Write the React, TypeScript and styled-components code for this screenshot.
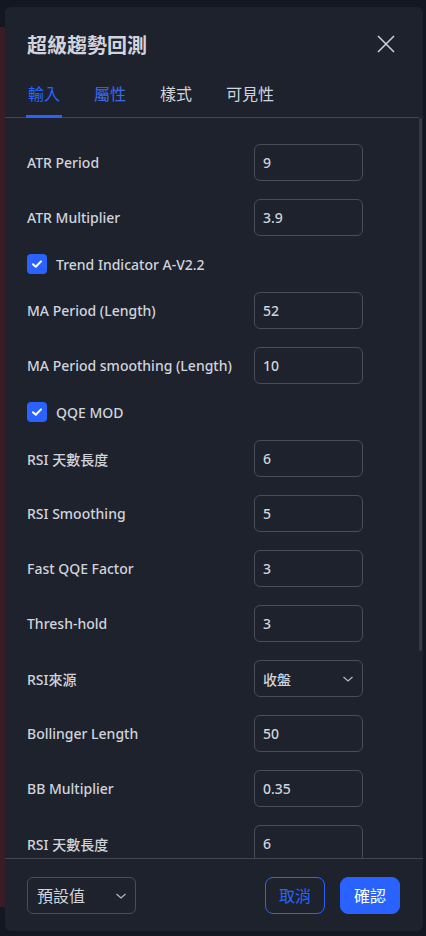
import React from "react";
import styled, { createGlobalStyle } from "styled-components";

type Field =
    | { kind: "input"; label: string; value: string }
    | { kind: "check"; label: string }
    | { kind: "select"; label: string; value: string };

const fields: Field[] = [
    { kind: "input", label: "ATR Period", value: "9" },
    { kind: "input", label: "ATR Multiplier", value: "3.9" },
    { kind: "check", label: "Trend Indicator A-V2.2" },
    { kind: "input", label: "MA Period (Length)", value: "52" },
    { kind: "input", label: "MA Period smoothing (Length)", value: "10" },
    { kind: "check", label: "QQE MOD" },
    { kind: "input", label: "RSI 天數長度", value: "6" },
    { kind: "input", label: "RSI Smoothing", value: "5" },
    { kind: "input", label: "Fast QQE Factor", value: "3" },
    { kind: "input", label: "Thresh-hold", value: "3" },
    { kind: "select", label: "RSI來源", value: "收盤" },
    { kind: "input", label: "Bollinger Length", value: "50" },
    { kind: "input", label: "BB Multiplier", value: "0.35" },
    { kind: "input", label: "RSI 天數長度", value: "6" },
];

const tabs = ["輸入", "屬性", "樣式", "可見性"];

// visible part of the list vs. its full height, for the drawn scroll thumb
const thumbRatio = 0.72;

const Chevron = () => (
    <svg width="12" height="8" viewBox="0 0 12 8">
        <path d="M1.5 2l4.5 4 4.5-4" fill="none" stroke="#b2b5be" strokeWidth="1.3" />
    </svg>
);

const App: React.FC = () => {
    return (
        <Page>
            <Global />
            <Dialog>
                <Header>
                    <Title>超級趨勢回測</Title>
                    <Close>
                        <svg width="18" height="18" viewBox="0 0 18 18">
                            <path d="M1 1l16 16M17 1L1 17" stroke="#d1d4dc" strokeWidth="1.5" />
                        </svg>
                    </Close>
                </Header>
                <TabBar>
                    {tabs.map((t, i) => (
                        <Tab key={t} active={i === 0} hover={i === 1}>{t}</Tab>
                    ))}
                </TabBar>
                <Scroller>
                    <Body>
                        {fields.map((f, i) =>
                            f.kind === "check" ? (
                                <CheckRow key={i}>
                                    <Box>
                                        <svg width="14" height="14" viewBox="0 0 14 14">
                                            <path d="M3 7.2l2.8 2.6L11 4.4" fill="none" stroke="#fff" strokeWidth="2" strokeLinecap="round" strokeLinejoin="round" />
                                        </svg>
                                    </Box>
                                    {f.label}
                                </CheckRow>
                            ) : (
                                <Row key={i}>
                                    <Label>{f.label}</Label>
                                    {f.kind === "input" ? (
                                        <Input>{f.value}</Input>
                                    ) : (
                                        <Select>
                                            {f.value}
                                            <Chevron />
                                        </Select>
                                    )}
                                </Row>
                            )
                        )}
                    </Body>
                    <Thumb style={{ height: `${thumbRatio * 100}%` }} />
                </Scroller>
                <Footer>
                    <Preset>
                        預設值
                        <Chevron />
                    </Preset>
                    <Actions>
                        <Button>取消</Button>
                        <Button primary>確認</Button>
                    </Actions>
                </Footer>
            </Dialog>
        </Page>
    );
};
export default App;

const Global = createGlobalStyle`
body {
    margin: 0;
    background: #131722;
    font-family: "Noto Sans", "Noto Sans CJK TC", sans-serif;
}
`

const Page = styled.div`
width: 426px;
height: 936px;
box-sizing: border-box;
padding: 7px 3px 5px 5px;
background:
    linear-gradient(to right, #3a1c24 5px, transparent 5px) 0 27px / 100% 880px no-repeat,
    #131722;
`

const Dialog = styled.div`
height: 100%;
display: flex;
flex-direction: column;
background: #1e222d;
border-radius: 6px;
overflow: hidden;
`

const Header = styled.div`
height: 64px;
flex-shrink: 0;
display: flex;
align-items: center;
justify-content: space-between;
padding: 10px 28px 0 22px;
box-sizing: border-box;
`

const Title = styled.div`
font-size: 20px;
font-weight: 600;
color: #d1d4dc;
`

const Close = styled.div`
width: 18px;
height: 18px;
display: flex;
`

const TabBar = styled.div`
display: flex;
gap: 30px;
padding-left: 21px;
border-bottom: 1px solid #434651;
margin-right: 4px;
flex-shrink: 0;
`

const Tab = styled.div<{ active?: boolean; hover?: boolean }>`
font-size: 16px;
line-height: 24px;
padding: 11px 2px 9px;
margin-bottom: -1px;
color: ${p => (p.active ? "#2962ff" : p.hover ? "#3d6be8" : "#d1d4dc")};
border-bottom: 3px solid ${p => (p.active ? "#2962ff" : "transparent")};
`

const Scroller = styled.div`
position: relative;
flex: 1;
min-height: 0;
`

const Body = styled.div`
height: 100%;
box-sizing: border-box;
overflow: hidden;
display: flex;
flex-direction: column;
gap: 18px;
padding: 26px 0 0 22px;
`

const Thumb = styled.div`
position: absolute;
top: 0;
right: 1px;
width: 3px;
background: #363a45;
border-radius: 2px;
`

const Row = styled.div`
display: grid;
grid-template-columns: 227px 109px;
align-items: center;
flex-shrink: 0;
`

const Label = styled.div`
font-size: 14px;
font-weight: 500;
color: #d1d4dc;
`

const Input = styled.div`
height: 37px;
box-sizing: border-box;
border: 1px solid #4a4d58;
border-radius: 6px;
padding: 0 8px;
display: flex;
align-items: center;
font-size: 14px;
font-weight: 500;
color: #d1d4dc;
`

const Select = styled(Input)`
justify-content: space-between;
padding-right: 8px;
`

const CheckRow = styled.div`
display: flex;
align-items: center;
gap: 9px;
height: 20px;
flex-shrink: 0;
font-size: 14px;
font-weight: 500;
color: #d1d4dc;
`

const Box = styled.div`
width: 20px;
height: 20px;
border-radius: 4px;
background: #2962ff;
display: flex;
align-items: center;
justify-content: center;
`

const Footer = styled.div`
flex-shrink: 0;
display: flex;
align-items: center;
justify-content: space-between;
padding: 18px 23px 17px 22px;
border-top: 1px solid #434651;
`

const Preset = styled.div`
width: 109px;
height: 37px;
box-sizing: border-box;
border: 1px solid #4a4d58;
border-radius: 6px;
padding: 0 8px 0 9px;
display: flex;
align-items: center;
justify-content: space-between;
font-size: 16px;
line-height: 20px;
color: #d1d4dc;
`

const Actions = styled.div`
display: flex;
gap: 15px;
`

const Button = styled.div<{ primary?: boolean }>`
width: 60px;
height: 37px;
box-sizing: border-box;
border-radius: 8px;
border: 1px solid #2962ff;
background: ${p => (p.primary ? "#2962ff" : "transparent")};
color: ${p => (p.primary ? "#ffffff" : "#2962ff")};
display: flex;
align-items: center;
justify-content: center;
font-size: 16px;
line-height: 20px;
`
